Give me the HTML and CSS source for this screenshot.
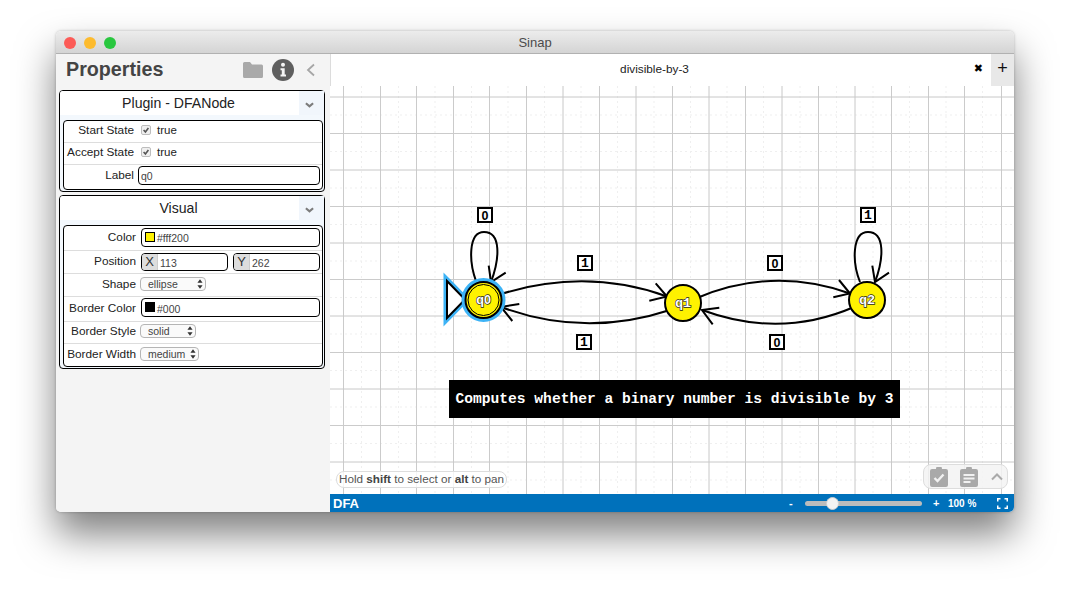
FILE: index.html
```html
<!DOCTYPE html>
<html lang="en">
<head>
<meta charset="utf-8">
<title>Sinap</title>
<link rel="stylesheet" href="styles.css">
</head>
<body>
<div class="window">
  <header class="titlebar">
    <div class="lights"><span class="light red"></span><span class="light yellow"></span><span class="light green"></span></div>
    <div class="window-title">Sinap</div>
  </header>
  <div class="content">
    <aside class="sidebar">
      <div class="side-head">
        <h1>Properties</h1>
        <svg class="ic-folder" viewBox="0 0 20 16"><path d="M1.5 0h5.5l2 2.5h9.500a1.500 1.500 0 0 1 1.500 1.500v10.500a1.500 1.500 0 0 1-1.500 1.500h-17a1.500 1.500 0 0 1-1.500-1.500v-13a1.500 1.500 0 0 1 1.500-1.500z"/></svg>
        <svg class="ic-info" viewBox="0 0 22 22"><circle cx="11" cy="11" r="11"/><circle cx="11" cy="5.800" r="2" class="ic-cut"/><path class="ic-cut" d="M8.500 9.300h4.200v6.200h1.300v2h-5.500v-2h1.300v-4.200h-1.300z"/></svg>
        <svg class="ic-back" viewBox="0 0 10 14"><path d="M8 1.500 2 7l6 5.500"/></svg>
      </div>

      <section class="panel">
        <div class="panel-head"><div class="panel-title">Plugin - DFANode</div><div class="panel-toggle"><svg viewBox="0 0 10 6"><path d="M1 1l4 3.500L9 1"/></svg></div></div>
        <div class="rows rows-plugin">
          <div class="row row-22 lift-3"><label>Start State</label><span class="check"><svg viewBox="0 0 10 10"><path d="M2 5l2.300 2.500L8 2.500"/></svg></span><span class="val">true</span></div>
          <div class="row row-22 lift-3"><label>Accept State</label><span class="check"><svg viewBox="0 0 10 10"><path d="M2 5l2.300 2.500L8 2.500"/></svg></span><span class="val">true</span></div>
          <div class="row row-24 row-last lift-4"><label>Label</label><div class="field field-tight"><span>q0</span></div></div>
        </div>
      </section>

      <section class="panel panel-second">
        <div class="panel-head"><div class="panel-title">Visual</div><div class="panel-toggle"><svg viewBox="0 0 10 6"><path d="M1 1l4 3.500L9 1"/></svg></div></div>
        <div class="rows rows-visual">
          <div class="row row-25 lift-2"><label>Color</label><div class="field"><i class="swatch swatch-yellow"></i><span>#fff200</span></div></div>
          <div class="row row-23 lift-1 row-position"><label>Position</label><div class="pair"><div class="field field-xy"><b>X</b><span>113</span></div><div class="field field-xy"><b>Y</b><span>262</span></div></div></div>
          <div class="row row-23 lift-2"><label>Shape</label><div class="select sel-shape">ellipse<svg viewBox="0 0 7 11"><path d="M3.500 0 6.500 4H.5zM3.500 11 .5 7h6z"/></svg></div></div>
          <div class="row row-25 lift-3"><label>Border Color</label><div class="field"><i class="swatch swatch-black"></i><span>#000</span></div></div>
          <div class="row row-22 lift-3"><label>Border Style</label><div class="select sel-style">solid<svg viewBox="0 0 7 11"><path d="M3.500 0 6.500 4H.5zM3.500 11 .5 7h6z"/></svg></div></div>
          <div class="row row-22 row-last lift-3"><label>Border Width</label><div class="select sel-width">medium<svg viewBox="0 0 7 11"><path d="M3.500 0 6.500 4H.5zM3.500 11 .5 7h6z"/></svg></div></div>
        </div>
      </section>
    </aside>

    <main class="main">
      <div class="tabs">
        <div class="tab"><span class="tab-name">divisible-by-3</span><span class="tab-close">✖</span></div>
        <div class="tab-add">+</div>
      </div>
      <div class="canvas">
        <svg class="diagram" viewBox="330 86 684 408">
          <path class="grid-minor" d="M361.500 86V494M398.500 86V494M435 86V494M471.500 86V494M508 86V494M544.500 86V494M581 86V494M617.500 86V494M654 86V494M690.500 86V494M727 86V494M763.500 86V494M800 86V494M836.500 86V494M873 86V494M909.500 86V494M946 86V494M982.500 86V494M330 115H1014M330 151.500H1014M330 188H1014M330 224.500H1014M330 261H1014M330 297.500H1014M330 334H1014M330 370.500H1014M330 407H1014M330 443.500H1014M330 480H1014"/>
          <path class="grid-major" d="M343.500 86V494M380.500 86V494M416.500 86V494M453.500 86V494M489.500 86V494M526.500 86V494M599.500 86V494M672.500 86V494M745.500 86V494M818.500 86V494M891.500 86V494M928.500 86V494M964.500 86V494M1001.500 86V494M330 133.500H1014M330 206.500H1014M330 279.500H1014M330 352.500H1014M330 425.500H1014"/>
          <path class="grid-soft" d="M563 86V494M636 86V494M709 86V494M782 86V494M855 86V494M330 97H1014M330 170H1014M330 243H1014M330 316H1014M330 389H1014M330 462H1014"/>

          <path class="edge" d="M476 281C469 262 468 232 484 232C501 232 500 258 491 282"/>
          <path class="edge" d="M488.700 265.700 491 282 505.700 272.700"/>
          <path class="edge" d="M498 295Q585 267 667 296.500"/>
          <path class="edge" d="M655.700 283.300 667 296.500 649.300 300.700"/>
          <path class="edge" d="M670 310Q585 338 501 307"/>
          <path class="edge" d="M519.300 304 501 307 512.300 321"/>
          <path class="edge" d="M697 298Q773 266 850 293.500"/>
          <path class="edge" d="M839 280 850 293.500 833.300 297.300"/>
          <path class="edge" d="M854 307Q780 339 702 310"/>
          <path class="edge" d="M719.300 307.700 702 310 712.700 324.300"/>
          <path class="edge" d="M860 282C852 262 852 232 868 232C885 232 884 258 875 282"/>
          <path class="edge" d="M872.300 265.700 875 282 889 272.700"/>

          <path class="start-halo" d="M447 281 465 299.500 447 318Z"/>
          <path class="start" d="M447 281 465 299.500 447 318Z"/>

          <circle class="halo" cx="483.500" cy="300" r="19"/>
          <circle class="node" cx="483.500" cy="300" r="18"/>
          <circle class="node-ring" cx="483.500" cy="300" r="15.500"/>
          <circle class="node" cx="683" cy="303" r="18"/>
          <circle class="node" cx="867" cy="300" r="18"/>
          <text class="node-label" x="483.500" y="304">q<tspan class="zero">0</tspan></text>
          <text class="node-label" x="683" y="307">q1</text>
          <text class="node-label" x="867" y="304">q2</text>

          <rect class="tag" x="478" y="208" width="14" height="14"/><text class="tag-text zero" x="485" y="219.500">0</text>
          <rect class="tag" x="578" y="256" width="14" height="14"/><text class="tag-text" x="585" y="267">1</text>
          <rect class="tag" x="577" y="335" width="14" height="14"/><text class="tag-text" x="584" y="346">1</text>
          <rect class="tag" x="768" y="256" width="14" height="14"/><text class="tag-text zero" x="775" y="267.500">0</text>
          <rect class="tag" x="770" y="335" width="14" height="14"/><text class="tag-text zero" x="777" y="346.500">0</text>
          <rect class="tag" x="861" y="208" width="14" height="14"/><text class="tag-text" x="868" y="219">1</text>

          <rect class="note" x="449" y="380" width="451" height="38"/>
          <text class="note-text" x="674.500" y="403">Computes whether a binary number is divisible by 3</text>
        </svg>
        <div class="hint">Hold <b>shift</b> to select or <b>alt</b> to pan</div>
        <div class="tools">
          <svg viewBox="0 0 18 20"><path class="tool-fill" d="M2 2h4a3 3 0 0 1 6 0h4a2 2 0 0 1 2 2v14a2 2 0 0 1-2 2H2a2 2 0 0 1-2-2V4a2 2 0 0 1 2-2z"/><path class="tool-line-w" d="M4.500 11l3 3 6-6.500"/></svg>
          <svg viewBox="0 0 18 20"><path class="tool-fill" d="M2 2h4a3 3 0 0 1 6 0h4a2 2 0 0 1 2 2v14a2 2 0 0 1-2 2H2a2 2 0 0 1-2-2V4a2 2 0 0 1 2-2z"/><path class="tool-line-w thin" d="M3.500 8h11M3.500 11.500h11M3.500 15h7"/></svg>
          <svg class="tool-up" viewBox="0 0 12 8"><path d="M1 6.500 6 1.500l5 5"/></svg>
        </div>
      </div>
      <footer class="status">
        <span class="mode">DFA</span>
        <span class="zoom-sign">-</span>
        <div class="slider"><span class="thumb"></span></div>
        <span class="zoom-sign plus">+</span>
        <span class="zoom-val">100 %</span>
        <svg class="ic-full" viewBox="0 0 11 11"><path d="M.75 3.500V.75H3.500M7.500.75h2.750V3.500M10.250 7.500v2.750H7.500M3.500 10.250H.75V7.500"/></svg>
      </footer>
    </main>
  </div>
</div>
</body>
</html>
```

FILE: styles.css
```css
* { box-sizing: border-box; }
html, body { height: 100%; }
body {
  margin: 0;
  padding: 31px 56px 0;
  background: #fff;
  overflow: hidden;
  font-family: "Liberation Sans", Arial, sans-serif;
  color: #222;
}
.window {
  width: 958px;
  height: 481px;
  border-radius: 5px;
  display: flex;
  flex-direction: column;
  box-shadow: 0 22px 38px rgba(0,0,0,.5), 0 0 3px rgba(0,0,0,.25);
  overflow: hidden;
}
.titlebar {
  height: 23px;
  flex: none;
  position: relative;
  display: flex;
  align-items: center;
  justify-content: center;
  padding-top: 1px;
  background: linear-gradient(#ececec, #d4d4d4);
  border-bottom: 1px solid #b1b1b1;
}
.lights {
  position: absolute;
  left: 8px;
  top: 6px;
  display: flex;
  gap: 8px;
}
.light { width: 12px; height: 12px; border-radius: 50%; }
.red { background: #fc5b57; }
.yellow { background: #fdbb2e; }
.green { background: #29c73f; }
.window-title { font-size: 13px; color: #4b4b4b; }
.content { flex: 1; display: flex; min-height: 0; }

.sidebar {
  width: 274px;
  flex: none;
  background: #f4f4f4;
  padding: 0 5px 0 3px;
}
.side-head {
  height: 36px;
  display: flex;
  align-items: center;
  padding: 0 0 5px 7px;
}
.side-head h1 {
  margin: 0;
  flex: 1;
  font-size: 19.700px;
  font-weight: bold;
  color: #444;
}
.ic-folder { width: 20px; height: 16px; fill: #a9a9a9; margin-right: 9px; }
.ic-info { width: 22px; height: 22px; fill: #5f5f5f; margin-right: 12px; }
.ic-cut { fill: #f4f4f4; }
.ic-back { width: 10px; height: 14px; fill: none; stroke: #a6a6a6; stroke-width: 1.800; margin-right: 9px; }

.panel {
  width: 266px;
  border: 1px solid #000;
  border-radius: 4px;
  background: #f3f8fd;
  padding-bottom: 1px;
}
.panel-second { margin-top: 3px; }
.panel-head { height: 24px; display: flex; background: #fff; border-radius: 3px 3px 0 0; }
.panel-title {
  flex: 1;
  text-align: center;
  font-size: 14.100px;
  line-height: 24px;
  color: #222;
  padding-right: 2px;
}
.panel-toggle {
  width: 25px;
  background: #f1f6fc;
  display: flex;
  align-items: center;
  justify-content: center;
  padding: 3px 4px 0 0;
}
.panel-toggle svg { width: 9px; height: 6px; fill: none; stroke: #7c7c7c; stroke-width: 2.400; }
.rows {
  margin: 5px 1px 0 3px;
  border: 1px solid #000;
  border-radius: 4px;
  background: #fff;
}
.row {
  display: flex;
  align-items: center;
  border-bottom: 1px solid #ddd;
  font-size: 11.800px;
}
.row-22 { height: 22px; }
.row-23 { height: 23px; }
.row-24 { height: 24px; }
.row-25 { height: 25px; }
.row-last { border-bottom: 0; }
.lift-1 { padding-bottom: 1px; }
.lift-2 { padding-bottom: 2px; }
.lift-3 { padding-bottom: 3px; }
.lift-4 { padding-bottom: 4px; }
.row label {
  flex: none;
  text-align: right;
  color: #222;
  white-space: nowrap;
}
.rows-plugin label { width: 70px; margin-right: 7px; }
.rows-visual label { width: 72px; margin-right: 5px; }
.row-position label { padding-bottom: 2px; }
.check {
  width: 10px;
  height: 10px;
  margin-right: 6px;
  border: 1px solid #bdbdbd;
  border-radius: 2px;
  background: #efefef;
  display: flex;
}
.check svg { width: 8px; height: 8px; fill: none; stroke: #555; stroke-width: 2; }
.val { font-size: 11.500px; color: #222; }
.field {
  width: 179px;
  height: 19px;
  border: 1px solid #000;
  border-radius: 4px;
  background: #fff;
  display: flex;
  align-items: center;
  font-size: 10.500px;
  color: #444;
  padding: 2px 0 0 3px;
  overflow: hidden;
}
.field-tight { width: 182px; margin-left: -3px; padding-left: 2px; }
.swatch { width: 10px; height: 10px; margin: -3px 2px 0 0; border: 1px solid #000; flex: none; }
.swatch-yellow { background: #fff200; }
.swatch-black { background: #000; }
.pair { width: 179px; display: flex; justify-content: space-between; }
.field-xy { width: 87px; height: 18px; padding: 0; }
.field-xy b {
  width: 16px;
  align-self: stretch;
  background: #ddd;
  border-right: 1px solid #ccc;
  font-weight: normal;
  font-size: 13px;
  color: #333;
  text-align: center;
  line-height: 15px;
  margin-right: 2px;
}
.field-xy span { padding-top: 2px; }
.select {
  height: 14px;
  margin-left: -1px;
  border: 1px solid #b5b5b5;
  border-radius: 4px;
  background: #fafafa;
  font-size: 10.500px;
  color: #444;
  line-height: 12px;
  padding: 0 2px 0 7px;
  display: flex;
  align-items: center;
  justify-content: space-between;
}
.select svg { width: 6px; height: 10px; fill: #333; }
.sel-shape { width: 66px; }
.sel-style { width: 56px; }
.sel-width { width: 59px; }

.main {
  flex: 1;
  min-width: 0;
  display: flex;
  flex-direction: column;
  background: #fff;
}
.tabs { height: 32px; flex: none; display: flex; border-left: 1px solid #dcdcdc; }
.tab {
  flex: 1;
  position: relative;
  display: flex;
  align-items: center;
  justify-content: center;
  font-size: 11.800px;
  color: #222;
  padding: 0 13px 2px 0;
}
.tab-close {
  position: absolute;
  right: 8px;
  top: 8px;
  font: 11px/14px "DejaVu Sans", sans-serif;
  color: #000;
}
.tab-add {
  width: 23px;
  background: #e8e8e8;
  text-align: center;
  font-size: 18px;
  line-height: 29px;
  color: #111;
}
.canvas { flex: 1; position: relative; min-height: 0; }
.diagram { display: block; width: 684px; height: 408px; }
.grid-major { stroke: #cbcbcb; stroke-width: 1; fill: none; }
.grid-soft { stroke: #c8c8c8; stroke-width: 1; fill: none; }
.grid-minor { stroke: #efefef; stroke-width: 1; stroke-dasharray: 2 3; fill: none; }
.edge { fill: none; stroke: #000; stroke-width: 2; }
.start-halo { fill: none; stroke: #3db3f6; stroke-width: 7; }
.start { fill: #fff; stroke: #000; stroke-width: 2; }
.halo { fill: none; stroke: #3db3f6; stroke-width: 6; }
.node { fill: #fff200; stroke: #000; stroke-width: 2; }
.node-ring { fill: none; stroke: #000; stroke-width: 1; }
.node-label {
  font: bold 13.500px "Liberation Mono", monospace;
  text-anchor: middle;
  fill: #fff;
  stroke: #222;
  stroke-width: 1.300px;
  paint-order: stroke;
}
.node-label .zero { font-family: "Liberation Sans", sans-serif; font-size: 12.500px; }
.tag { fill: #fff; stroke: #000; stroke-width: 2; }
.tag-text {
  font: bold 13px "Liberation Mono", monospace;
  text-anchor: middle;
  fill: #000;
}
.tag-text.zero { font-family: "Liberation Sans", sans-serif; font-size: 12.500px; }
.note { fill: #000; }
.note-text {
  font: bold 14.600px "Liberation Mono", monospace;
  text-anchor: middle;
  fill: #fff;
}
.hint {
  position: absolute;
  left: 6px;
  top: 385px;
  height: 17px;
  padding: 0 2px;
  border: 1px solid #ddd;
  border-radius: 8px;
  background: rgba(255,255,255,.8);
  font-size: 11.700px;
  line-height: 14px;
  color: #555;
  white-space: nowrap;
}
.hint b { color: #444; }
.tools {
  position: absolute;
  left: 593px;
  top: 378px;
  width: 85px;
  height: 25px;
  border: 1px solid #ddd;
  border-radius: 8px;
  background: rgba(243,243,243,.85);
  display: flex;
  align-items: center;
  padding-left: 6px;
  gap: 12px;
}
.tools svg { width: 18px; height: 20px; flex: none; }
.tools .tool-up { width: 12px; height: 8px; margin-left: 1px; fill: none; stroke: #aaa; stroke-width: 2; }
.tool-fill { fill: #a9a9a9; }
.tool-line-w { fill: none; stroke: #f1f1f1; stroke-width: 2.400; }
.tool-line-w.thin { stroke-width: 1.800; }
.status {
  height: 18px;
  flex: none;
  background: #0071bb;
  color: #fff;
  display: flex;
  align-items: center;
  font-weight: bold;
  padding: 0 6px 0 3px;
}
.mode { font-size: 13px; width: 456px; }
.zoom-sign { font-size: 11px; width: 16px; }
.zoom-sign.plus { width: 15px; margin-left: 11px; }
.slider {
  width: 117px;
  height: 5px;
  border-radius: 3px;
  background: #bcbcbc;
  position: relative;
}
.thumb {
  position: absolute;
  left: 21px;
  top: -4px;
  width: 13px;
  height: 13px;
  border-radius: 50%;
  background: #f3f3f3;
  border: 1px solid #ccc;
}
.zoom-val { font-size: 10px; width: 49px; }
.ic-full { width: 11px; height: 11px; fill: none; stroke: #fff; stroke-width: 1.500; }
```
